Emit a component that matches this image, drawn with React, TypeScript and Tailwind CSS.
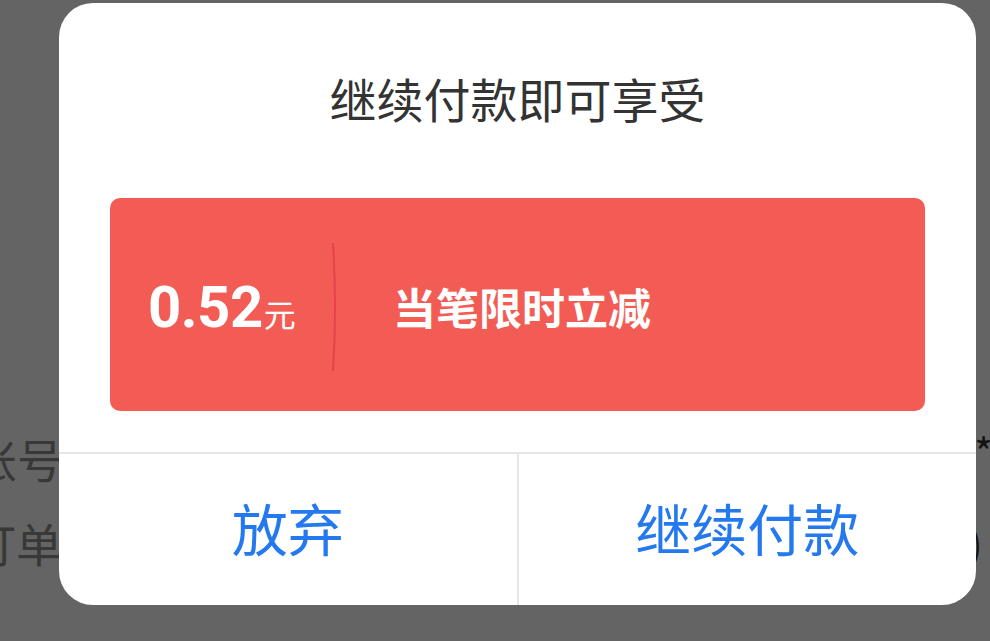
const cjk = "font-['Noto_Sans_CJK_SC','Noto_Sans',sans-serif]";

function BackgroundPage() {
  return (
    <div className={`flex flex-col pt-[428px] ${cjk}`}>
      <div className="flex h-[60px] items-center justify-between">
        <span className="-ml-[29px] text-[46px] leading-none text-[#383838]">账号</span>
        <span className="-mr-[3px] -mt-[14px] text-[40px] leading-none text-[#141414]">*</span>
      </div>
      <div className="mt-[24px] flex h-[60px] items-center justify-between">
        <span className="-ml-[30px] text-[46px] leading-none text-[#383838]">订单</span>
        <span className="mr-[7px] text-[44px] font-light leading-none text-[#141414]">)</span>
      </div>
    </div>
  );
}

function DiscountCard() {
  return (
    <div className="mx-[51px] mt-[77px] flex h-[213px] items-center rounded-[10px] bg-[#f35c55] pt-[4px] text-white">
      <div className="flex w-[224px] items-baseline pl-[38px]">
        <span className="font-['Roboto',sans-serif] text-[58px] font-bold leading-none tracking-[-0.5px]">
          0.52
        </span>
        <span className={`ml-[1px] text-[32px] leading-none ${cjk}`}>元</span>
      </div>
      <svg width="6" height="128" viewBox="0 0 6 128" className="-ml-[2px]">
        <path d="M1 0 Q5 64 1 128" stroke="#e5434a" strokeWidth="2" fill="none" />
      </svg>
      <span className={`ml-[55px] text-[43px] font-bold leading-none ${cjk}`}>当笔限时立减</span>
    </div>
  );
}

export default function App() {
  return (
    <div className="relative h-[641px] w-[990px] overflow-hidden bg-[#646464]">
      <BackgroundPage />

      <div className="absolute left-[59px] top-[3px] flex h-[602px] w-[917px] flex-col rounded-[34px] bg-white">
        <h2 className={`mt-[71px] text-center text-[47px] leading-none text-[#333333] ${cjk}`}>
          继续付款即可享受
        </h2>

        <DiscountCard />

        <div className="mt-[41px] flex flex-1 border-t-2 border-[#e6e6e6]">
          <button
            className={`flex flex-1 items-center justify-center border-r-2 border-[#e6e6e6] pb-[6px] text-[56px] leading-none text-[#2479ee] ${cjk}`}
          >
            放弃
          </button>
          <button
            className={`flex flex-1 items-center justify-center pb-[6px] text-[56px] leading-none text-[#2479ee] ${cjk}`}
          >
            继续付款
          </button>
        </div>
      </div>
    </div>
  );
}
